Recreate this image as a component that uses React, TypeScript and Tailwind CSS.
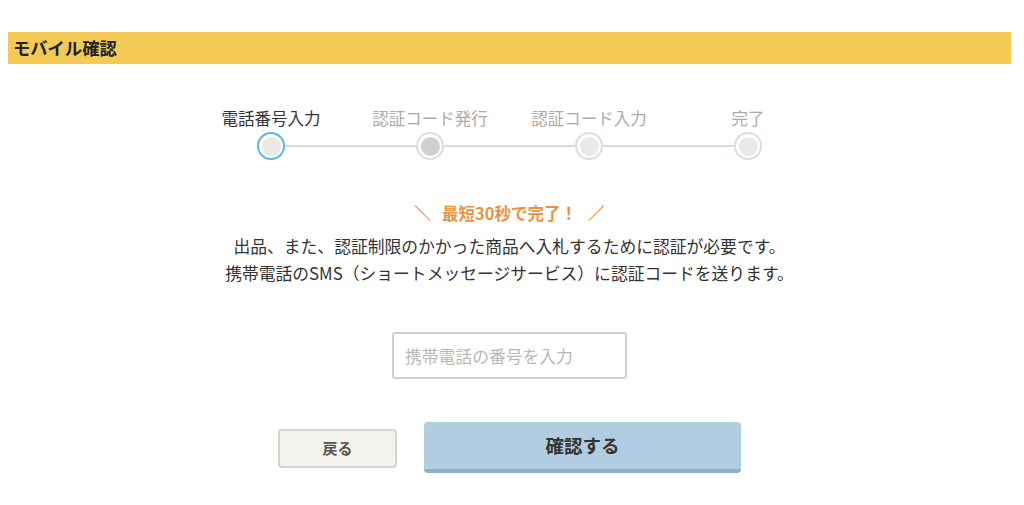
const font = { fontFamily: '"Noto Sans CJK JP", "Noto Sans", sans-serif' };

const steps = [
    { label: "電話番号入力", active: true, dot: "bg-[#ebe8e5]" },
    { label: "認証コード発行", active: false, dot: "bg-[#d2cecb]" },
    { label: "認証コード入力", active: false, dot: "bg-[#ebe8e5]" },
    { label: "完了", active: false, dot: "bg-[#ebe8e5]" },
];

function StepDot({ active, dot }: { active: boolean; dot: string }) {
    return (
        <div
            className={`w-[28px] h-[28px] shrink-0 rounded-full border-2 bg-white flex items-center justify-center ${active ? "border-[#5db6e2]" : "border-[#e0ddd9]"}`}
        >
            <div className={`w-[19px] h-[19px] rounded-full ${dot}`} />
        </div>
    );
}

export default function App() {
    return (
        <div className="w-[1024px] h-[505px] bg-white overflow-hidden" style={font}>
            <div className="ml-[8px] w-[1003px] flex flex-col items-center">
                {/* Header */}
                <div className="mt-[32px] w-full h-[32px] bg-[#f5c955] flex items-center px-[5px]">
                    <h1 className="text-[17.3px] font-bold text-[#222] leading-none">モバイル確認</h1>
                </div>

                {/* Steps */}
                <div className="mt-[42px] w-[636px]">
                    <div className="grid grid-cols-4">
                        {steps.map((s) => (
                            <div
                                key={s.label}
                                className={`text-center text-[16.5px] leading-[24px] ${s.active ? "text-[#333]" : "text-[#aaa]"}`}
                            >
                                {s.label}
                            </div>
                        ))}
                    </div>
                    <div className="mt-[2px] flex items-center px-[65.5px]">
                        {steps.map((s, i) => (
                            <div key={s.label} className={`flex items-center ${i < steps.length - 1 ? "flex-1" : ""}`}>
                                <StepDot active={s.active} dot={s.dot} />
                                {i < steps.length - 1 && <div className="flex-1 h-[2px] bg-[#dcd9d5]" />}
                            </div>
                        ))}
                    </div>
                </div>

                {/* Message */}
                <p className="mt-[41px] flex items-center gap-[11px] text-[16.5px] leading-[24px] font-bold text-[#ea9240]">
                    <span className="font-black text-[#e8852a]">＼</span>
                    <span>最短30秒で完了！</span>
                    <span className="font-black text-[#e8852a]">／</span>
                </p>
                <div className="mt-[7.5px] text-center text-[16.8px] leading-[27px] text-[#333]">
                    <p>出品、また、認証制限のかかった商品へ入札するために認証が必要です。</p>
                    <p>携帯電話のSMS（ショートメッセージサービス）に認証コードを送ります。</p>
                </div>

                {/* Input */}
                <input
                    type="tel"
                    placeholder="携帯電話の番号を入力"
                    className="mt-[45.5px] w-[235px] h-[47px] border-2 border-[#cfcfcb] rounded-[3px] px-[11px] text-[16.8px] text-[#333] placeholder:text-[#b8b8b8] outline-none"
                    style={font}
                />

                {/* Buttons */}
                <div className="mt-[43px] flex items-center gap-[27px]">
                    <button
                        className="w-[119px] h-[39px] mt-[2px] rounded-[4px] border-2 border-[#d4d4ce] bg-[#f4f3ee] text-[15px] font-bold text-[#555]"
                        style={font}
                    >
                        戻る
                    </button>
                    <button
                        className="w-[317px] h-[51px] rounded-[4px] bg-[#b0cde2] border-b-[4px] border-[#8fb0c9] text-[18.5px] font-bold text-[#333]"
                        style={font}
                    >
                        確認する
                    </button>
                </div>
            </div>
        </div>
    );
}
